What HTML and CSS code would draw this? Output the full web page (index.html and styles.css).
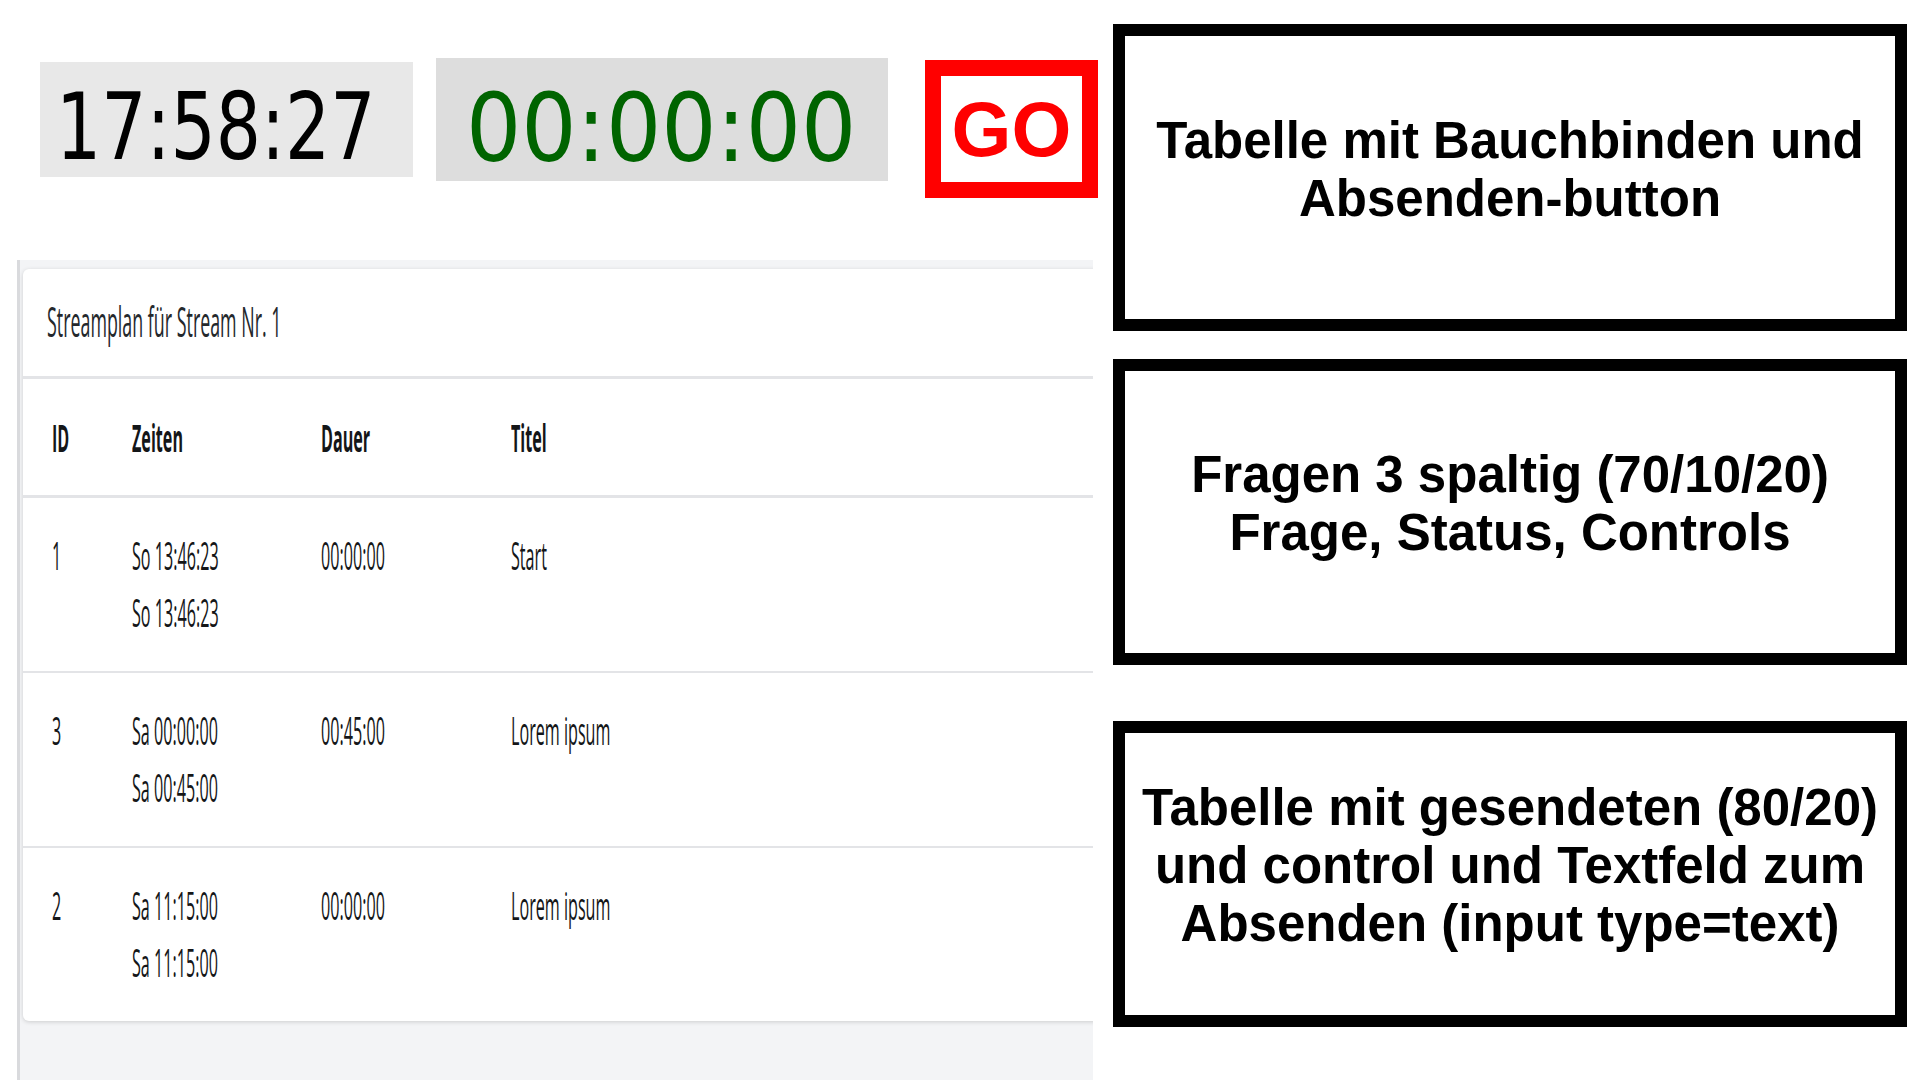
FILE: index.html
```html
<!DOCTYPE html>
<html lang="de">
<head>
<meta charset="utf-8">
<title>Streamplan</title>
<link rel="stylesheet" href="styles.css">
</head>
<body>
<div class="page">
  <main class="left">
    <div class="clocks">
      <div class="clock clock-now"><span class="clock-text">17:58:27</span></div>
      <div class="clock clock-timer"><span class="clock-text">00:00:00</span></div>
      <button class="go-btn" type="button">GO</button>
    </div>
    <section class="panel">
      <div class="card">
        <div class="card-header"><span class="sq">Streamplan für Stream Nr. 1</span></div>
        <div class="table">
          <div class="tr thead">
            <div class="td"><span class="sq">ID</span></div>
            <div class="td"><span class="sq">Zeiten</span></div>
            <div class="td"><span class="sq">Dauer</span></div>
            <div class="td"><span class="sq">Titel</span></div>
          </div>
          <div class="tr first">
            <div class="td"><span class="sq">1</span></div>
            <div class="td"><div><span class="sq">So 13:46:23</span></div><div><span class="sq">So 13:46:23</span></div></div>
            <div class="td"><span class="sq">00:00:00</span></div>
            <div class="td"><span class="sq">Start</span></div>
          </div>
          <div class="tr">
            <div class="td"><span class="sq">3</span></div>
            <div class="td"><div><span class="sq">Sa 00:00:00</span></div><div><span class="sq">Sa 00:45:00</span></div></div>
            <div class="td"><span class="sq">00:45:00</span></div>
            <div class="td"><span class="sq">Lorem ipsum</span></div>
          </div>
          <div class="tr">
            <div class="td"><span class="sq">2</span></div>
            <div class="td"><div><span class="sq">Sa 11:15:00</span></div><div><span class="sq">Sa 11:15:00</span></div></div>
            <div class="td"><span class="sq">00:00:00</span></div>
            <div class="td"><span class="sq">Lorem ipsum</span></div>
          </div>
        </div>
      </div>
    </section>
  </main>
  <aside class="right">
    <div class="note note-1">Tabelle mit Bauchbinden und<br>Absenden-button</div>
    <div class="note note-2">Fragen 3 spaltig (70/10/20)<br>Frage, Status, Controls</div>
    <div class="note note-3">Tabelle mit gesendeten (80/20)<br>und control und Textfeld zum<br>Absenden (input type=text)</div>
  </aside>
</div>
</body>
</html>
```

FILE: styles.css
```css
html, body {
  margin: 0;
  padding: 0;
}

body {
  background: #ffffff;
  font-family: "Open Sans", "Liberation Sans", sans-serif;
  color: #212529;
}

.page {
  display: flex;
  height: 1080px;
  overflow: hidden;
}

/* ---------- left column ---------- */
.left {
  flex: none;
  width: 1093px;
  display: flex;
  flex-direction: column;
}

.clocks {
  display: flex;
  align-items: flex-start;
  padding: 58px 0 0 40px;
}

.clocks > * {
  flex: none;
}

.clock {
  box-sizing: border-box;
  font-family: "DejaVu Sans", "Liberation Sans", sans-serif;
  white-space: nowrap;
  overflow: visible;
}

.clock-text {
  display: inline-block;
  transform-origin: 0 50%;
}

.clock-now {
  width: 373px;
  height: 115px;
  margin-top: 4px;
  padding: 19px 0 0 16px;
  background: #e8e8e8;
  color: #000000;
  font-size: 93px;
  line-height: 93px;
}

.clock-now .clock-text {
  transform: scaleX(0.765);
}

.clock-timer {
  width: 452px;
  height: 123px;
  margin-left: 23px;
  padding: 23px 0 0 30px;
  background: #dddddd;
  color: #006400;
  font-size: 95px;
  line-height: 95px;
}

.clock-timer .clock-text {
  transform: scaleX(0.915);
}

.go-btn {
  box-sizing: border-box;
  width: 173px;
  height: 138px;
  margin: 2px 0 0 37px;
  padding: 0;
  border: 16px solid #ff0000;
  background: #ffffff;
  color: #ff0000;
  font-family: "Liberation Sans", Arial, sans-serif;
  font-weight: 700;
  font-size: 77px;
  line-height: 1;
  display: flex;
  align-items: center;
  justify-content: center;
  cursor: pointer;
}

.panel {
  flex: 1;
  margin: 62px 0 0 17px;
  padding: 9px 0 0 3px;
  background: #f3f4f6;
  border-left: 3px solid #d9dadd;
  overflow: hidden;
}

.card {
  background: #ffffff;
  border-radius: 6px;
  box-shadow: 0 1px 4px rgba(0, 0, 0, 0.16);
  margin-right: -40px;
}

.sq {
  display: inline-block;
  white-space: nowrap;
  transform: scaleX(0.425);
  transform-origin: 0 50%;
}

.card-header {
  padding: 27px 24px 30px;
  font-size: 42px;
  line-height: 50px;
  font-weight: 500;
  color: #24282c;
}

.tr {
  display: grid;
  grid-template-columns: 80px 189px 190px 1fr;
  padding: 29px 0 30px 29px;
  border-top: 2px solid #e3e4e7;
  font-size: 38px;
  line-height: 57px;
  font-weight: 500;
  color: #141618;
}

.td {
  min-width: 0;
  white-space: nowrap;
}

.thead {
  border-top-width: 3px;
  padding: 30px 0 29px 29px;
  font-weight: 700;
}

.tr.first {
  border-top-width: 3px;
}

/* ---------- right column ---------- */
.right {
  flex: none;
  width: 794px;
  margin-left: 20px;
  padding-top: 24px;
  display: flex;
  flex-direction: column;
}

.note {
  box-sizing: border-box;
  border: 12px solid #000000;
  padding-bottom: 16px;
  display: flex;
  align-items: center;
  justify-content: center;
  text-align: center;
  font-family: "Liberation Sans", Arial, sans-serif;
  font-weight: 700;
  font-size: 51px;
  line-height: 58px;
  color: #000000;
}

.note-1 {
  height: 307px;
}

.note-2 {
  height: 306px;
  margin-top: 28px;
}

.note-3 {
  height: 306px;
  margin-top: 56px;
}
```
